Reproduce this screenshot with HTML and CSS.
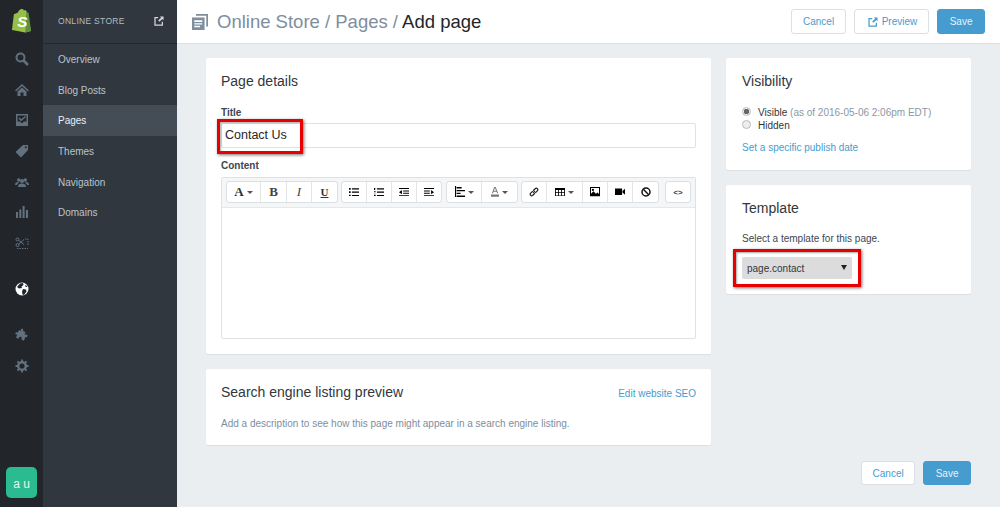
FILE: index.html
```html
<!DOCTYPE html>
<html lang="en">
<head>
  <meta charset="UTF-8">
  <title>Add page</title>
  <link rel="stylesheet" href="styles.css">
</head>
<body>
  <aside class="rail">
    <svg class="logo" viewBox="0 0 22 26" width="21" height="25"><path fill="#95bf47" d="M3 6.500 7 5c1-2.500 2.500-4 4.500-4 1 0 1.500.5 2 1.500l1.500-.5 1 1 .8 1.200L21 24l-6 1.500L1 23z"/><path fill="#5e8e3e" d="m16 3 1 1.500 1.500.5L21 24l-6 1.500z"/><text x="6.500" y="20" class="logo-s">S</text></svg>
    <a class="rail-item"><svg viewBox="0 0 14 14"><circle cx="5.500" cy="5.500" r="4" fill="none" stroke="currentColor" stroke-width="2"/><path d="m8.500 8.500 4.500 4.500" stroke="currentColor" stroke-width="2.600"/></svg></a>
    <a class="rail-item"><svg viewBox="0 0 14 14"><path fill="currentColor" d="M7 1 0 7.500l1 1 6-5.500 6 5.500 1-1zM2.500 8.500 7 4.500l4.500 4V13H8.500V9.500h-3V13h-3z"/></svg></a>
    <a class="rail-item"><svg viewBox="0 0 14 14"><path fill="currentColor" fill-rule="evenodd" d="M1 1h12v12H1zM2.500 2.500v6h2.800l1 1.500h1.400l1-1.500h2.800v-6z"/><path d="m4 5 2.200 2.200L10.500 3.500" fill="none" stroke="currentColor" stroke-width="1.500"/></svg></a>
    <a class="rail-item"><svg viewBox="0 0 14 14"><path fill="currentColor" fill-rule="evenodd" d="M8 1h5v5l-7 7.500L.5 8zM10.800 2.300a1 1 0 1 0 .01 0z"/></svg></a>
    <a class="rail-item"><svg viewBox="0 0 14 14"><circle cx="3.700" cy="5" r="1.700" fill="currentColor"/><circle cx="10.300" cy="5" r="1.700" fill="currentColor"/><circle cx="7" cy="6" r="2" fill="currentColor"/><path fill="currentColor" d="M3 12c0-2.500 1.500-3.500 4-3.500s4 1 4 3.500zM0 10c0-2 1-3 3-3l1 .8C2.800 8.500 2.200 9 2 10zM14 10c0-2-1-3-3-3l-1 .8c1.200.7 1.800 1.200 2 2.200z"/></svg></a>
    <a class="rail-item"><svg viewBox="0 0 14 14"><path fill="currentColor" d="M1 7h2v6H1zM4.300 4.500h2V13h-2zM7.600 1h2v12h-2zM10.900 5H13v8h-2.100z"/></svg></a>
    <a class="rail-item"><svg viewBox="0 0 14 14"><circle cx="2.500" cy="3.500" r="1.500" fill="none" stroke="currentColor"/><circle cx="2.500" cy="9" r="1.500" fill="none" stroke="currentColor"/><path d="M3.500 4.200 9 8.500M3.500 8.300 9 3.500" stroke="currentColor"/><path d="M10 3h3v6M2 12.500h11" fill="none" stroke="currentColor" stroke-dasharray="1.500 1"/></svg></a>
    <a class="rail-item globe"><svg viewBox="0 0 14 14"><circle cx="7" cy="7" r="6.500" fill="#fff"/><path fill="#22262b" d="M5 1.500 8 1l.5 2-2 1.500L7 6 4 6.500 2 5zM8 7l3 .5.500 2L9 13 7.500 12.500 7 9.500zM10.500 2.500 12.500 5 10.500 5z"/></svg></a>
    <a class="rail-item puzzle"><svg viewBox="0 0 14 14"><path fill="currentColor" d="M6 1.200c1-.9 2.200-.5 2.200.7 0 .6-.3.8 0 1.100l2.300 1.300-1 2c.4.600 1 .2 1.600.2 1.300 0 1.800 1.200 1 2.200-.6.700-1.200.4-1.800.3L9 12.800l-2.500-1.300c-.3-.4.2-.8.200-1.400 0-1-1.200-1.600-2.200-1-.9.600-.7 1.200-.7 1.800L1 9.500l1.300-2.700c-.3-.5-.8 0-1.300-.2C0 6 .2 4.500 1.300 4.300c.6-.1 1 .2 1.500.2L4.200 2l2 1c.4-.3-.6-1.100-.2-1.800z"/></svg></a>
    <a class="rail-item"><svg viewBox="0 0 14 14"><circle cx="7" cy="7" r="3.800" fill="none" stroke="currentColor" stroke-width="2.400"/><path d="M7 .5v13M.5 7h13M2.400 2.400l9.200 9.200M11.600 2.400l-9.200 9.200" stroke="currentColor" stroke-width="1.800" stroke-dasharray="2.200 8.600 2.200 0"/></svg></a>
    <div class="avatar">a u</div>
  </aside>

  <nav class="side">
    <div class="side-head">
      <span>ONLINE STORE</span>
      <svg viewBox="0 0 12 12" width="10" height="10"><path d="M5 2H1.200v8.800H10V7" fill="none" stroke="currentColor" stroke-width="1.500"/><path d="M7 .5h4.500V5L10 3.500 6.500 7 5 5.500 8.500 2z" fill="currentColor"/></svg>
    </div>
    <a class="side-link">Overview</a>
    <a class="side-link">Blog Posts</a>
    <a class="side-link active">Pages</a>
    <a class="side-link">Themes</a>
    <a class="side-link">Navigation</a>
    <a class="side-link">Domains</a>
  </nav>

  <div class="main">
    <header class="topbar">
      <svg class="crumb-icon" viewBox="1 1 14 14" width="16" height="16"><path fill="#7d8e9e" d="M4.500 1H15v11h-1.500V2.500h-9z"/><path fill="#7d8e9e" fill-rule="evenodd" d="M1 4h11v11H1zM3 6.500V8h7V6.500zM3 9v1.200h7V9zm0 2.300v1.200h5v-1.200z"/></svg>
      <h1 class="crumbs">Online Store / Pages / <b>Add page</b></h1>
      <div class="actions">
        <button class="btn">Cancel</button>
        <button class="btn preview"><svg viewBox="0 0 12 12" width="10" height="10"><path d="M5 2H1.200v8.800H10V7" fill="none" stroke="currentColor" stroke-width="1.500"/><path d="M7 .5h4.500V5L10 3.500 6.500 7 5 5.500 8.500 2z" fill="currentColor"/></svg>Preview</button>
        <button class="btn primary">Save</button>
      </div>
    </header>

    <div class="columns">
      <div class="col-left">
        <section class="card details">
          <h2>Page details</h2>
          <label class="field-label">Title</label>
          <div class="text-input">Contact Us</div>
          <label class="field-label content-label">Content</label>
          <div class="editor">
            <div class="toolbar">
              <div class="tool-group">
                <span class="tool w34 serif-a">A<i class="caret"></i></span>
                <span class="tool w26 serif-b">B</span>
                <span class="tool w25 serif-i">I</span>
                <span class="tool w25 serif-u">U</span>
              </div>
              <div class="tool-group">
                <span class="tool w25"><svg viewBox="0 0 12 10"><path d="M0 0h2v2H0zM0 4h2v2H0zM0 8h2v2H0zM3.500.3H12v1.400H3.500zM3.500 4.300H12v1.400H3.500zM3.500 8.300H12v1.400H3.500z"/></svg></span>
                <span class="tool w25"><svg viewBox="0 0 12 10"><path d="M0 0h1.500v2.500H0zM0 4h2v.8H0v.8h2v.6H0zM0 8h2v2H0zM3.500.3H12v1.400H3.500zM3.500 4.300H12v1.400H3.500zM3.500 8.300H12v1.400H3.500z"/></svg></span>
                <span class="tool w25"><svg viewBox="0 0 12 10"><path d="M0 0h12v1.300H0zM0 8.700h12V10H0zM5 3h7v1.200H5zM5 5.800h7V7H5zM3.500 2.500v5L0 5z"/></svg></span>
                <span class="tool w24"><svg viewBox="0 0 12 10"><path d="M0 0h12v1.300H0zM0 8.700h12V10H0zM0 3h7v1.200H0zM0 5.800h7V7H0zM8.500 2.500v5L12 5z"/></svg></span>
              </div>
              <div class="tool-group align-group">
                <span class="tool w35"><svg viewBox="0 0 9 10"><path d="M0 0h1v10H0zM1.500 1H6v1.300H1.500zM1.500 3.500H9v1.300H1.500zM1.500 6H5v1.300H1.500zM1.500 8.500H9V10H1.500z"/></svg><i class="caret"></i></span>
                <span class="tool w35"><svg class="small" viewBox="0 0 9 11"><path fill="#777" d="M3.700 0h1.600L8 7H6.800l-.6-1.700H2.800L2.200 7H1zM3.200 4.300h2.600L4.500 1zM0 8.500h9V11H0z"/></svg><i class="caret"></i></span>
              </div>
              <div class="tool-group">
                <span class="tool w25"><svg viewBox="0 0 12 12"><path d="M5 7 7 5M4.500 5 1.800 7.700a1.800 1.800 0 0 0 2.500 2.500L7 7.500M7.500 7l2.700-2.700a1.800 1.800 0 0 0-2.500-2.500L5 4.500" fill="none" stroke="#222" stroke-width="1.500"/></svg></span>
                <span class="tool w36"><svg viewBox="0 0 12 10"><path fill-rule="evenodd" d="M0 0h12v10H0zM1 2.500V5h2.800V2.500zm3.800 0V5h2.500V2.500zm3.500 0V5H11V2.500zM1 6v3h2.800V6zm3.800 0v3h2.500V6zm3.500 0v3H11V6z"/></svg><i class="caret"></i></span>
                <span class="tool w25"><svg viewBox="0 0 12 11"><path fill-rule="evenodd" d="M0 0h12v11H0zM1.200 1.200v7l3-3L7 8l2-1.500 1.800 2V1.200z"/><circle cx="3.500" cy="3.500" r="1.300"/></svg></span>
                <span class="tool w25"><svg viewBox="0 0 12 9"><path d="M0 .5h8.500v8H0zM9 3.500 12 1v7L9 5.500z"/></svg></span>
                <span class="tool w25"><svg viewBox="0 0 12 12"><circle cx="6" cy="6" r="4.800" fill="none" stroke="#111" stroke-width="1.800"/><path d="m2.800 2.800 6.400 6.400" stroke="#111" stroke-width="1.800"/></svg></span>
              </div>
              <div class="tool-group last">
                <span class="tool w24 code">&lt;&gt;</span>
              </div>
            </div>
            <div class="editor-body"></div>
          </div>
        </section>

        <section class="card seo">
          <div class="seo-head">
            <h2>Search engine listing preview</h2>
            <a class="link">Edit website SEO</a>
          </div>
          <p class="muted">Add a description to see how this page might appear in a search engine listing.</p>
        </section>
      </div>

      <div class="col-right">
        <section class="card visibility">
          <h2>Visibility</h2>
          <div class="radio-row"><i class="radio on"></i><span>Visible <em>(as of 2016-05-06 2:06pm EDT)</em></span></div>
          <div class="radio-row"><i class="radio"></i><span>Hidden</span></div>
          <a class="link publish">Set a specific publish date</a>
        </section>

        <section class="card template">
          <h2>Template</h2>
          <p>Select a template for this page.</p>
          <div class="select">page.contact<i></i></div>
        </section>
      </div>
    </div>

    <div class="footer-actions">
      <button class="btn">Cancel</button>
      <button class="btn primary">Save</button>
    </div>
  </div>

  <div class="callout callout-title"></div>
  <div class="callout callout-template"></div>
</body>
</html>
```

FILE: styles.css
```css
* { margin: 0; padding: 0; box-sizing: border-box; }
html, body {
  height: 100%;
  overflow: hidden;
}
body {
  display: flex;
  background: #ebeef0;
  font-family: "Liberation Sans", Arial, sans-serif;
  font-size: 10px;
  color: #31373d;
}

/* icon rail */
.rail {
  width: 43px;
  height: 507px;
  flex: none;
  background: #22262b;
  display: flex;
  flex-direction: column;
  align-items: center;
  padding-top: 8px;
  color: #62717f;
}
.logo { margin-bottom: 10.500px; }
.logo-s {
  font-family: "Liberation Sans", sans-serif;
  font-size: 16px;
  font-weight: bold;
  font-style: italic;
  fill: #fff;
}
.rail-item {
  height: 30.7px;
  flex: none;
  display: flex;
  align-items: center;
  justify-content: center;
}
.rail-item svg { width: 14px; height: 14px; display: block; }
.globe { margin-top: 15px; }
.puzzle { margin-top: 16px; }
.avatar {
  margin-top: auto;
  margin-bottom: 9px;
  width: 31px;
  height: 31px;
  border-radius: 5px;
  background: #2abb90;
  color: #e4f8f1;
  font-size: 12px;
  line-height: 34px;
  text-align: center;
}

/* secondary nav */
.side {
  width: 134px;
  flex: none;
  background: #31373e;
  color: #bcc3ca;
}
.side-head {
  height: 44px;
  border-bottom: 1px solid #24282d;
  padding: 0 13px 2px 15px;
  display: flex;
  align-items: center;
  justify-content: space-between;
  font-size: 8.500px;
  letter-spacing: .3px;
  color: #b4bbc2;
}
.side-head svg { color: #d3d8dc; }
.side-link {
  display: block;
  height: 30.7px;
  line-height: 32px;
  padding-left: 15px;
}
.side-link.active {
  background: #444d56;
  color: #eef0f2;
}

/* main area */
.main {
  flex: 1;
  min-width: 0;
}
.topbar {
  height: 44px;
  background: #fff;
  border-bottom: 1px solid #dde1e5;
  display: flex;
  align-items: center;
  padding: 0 15px;
}
.crumb-icon { margin-right: 9px; }
.crumbs {
  font-size: 18.500px;
  font-weight: normal;
  color: #7d8e9e;
}
.crumbs b {
  font-weight: normal;
  color: #22262b;
}
.actions {
  margin-left: auto;
  display: flex;
  gap: 8px;
}
.btn {
  height: 25px;
  padding: 0 10.500px;
  border: 1px solid #dbe0e4;
  border-radius: 3px;
  background: #fff;
  color: #479ccf;
  font-family: inherit;
  font-size: 10px;
  display: inline-flex;
  align-items: center;
  gap: 4px;
}
.btn.preview { padding: 0 11px 0 13px; }
.btn.primary {
  background: #479ccf;
  border-color: #479ccf;
  color: #e6f2f9;
  padding: 0 11.500px;
}

.columns {
  display: flex;
  gap: 15px;
  padding: 14px 29px 0 29px;
}
.col-left { width: 505px; }
.col-right { width: 245px; }
.card {
  background: #fff;
  border-radius: 2px;
  box-shadow: 0 1px 1px #dcdfe3;
  padding: 15px;
  margin-bottom: 15px;
}
.col-right .card { padding-left: 16px; }
.card h2 {
  font-size: 14px;
  font-weight: normal;
  line-height: 16px;
  color: #31373d;
}

/* page details */
.details { height: 296px; }
.field-label {
  display: block;
  margin-top: 17px;
  margin-bottom: 3px;
  font-size: 10px;
  line-height: 14px;
  font-weight: bold;
  color: #3d4650;
}
.field-label.content-label { margin: 11px 0 0; }
.text-input {
  height: 25px;
  border: 1px solid #dde2e6;
  border-radius: 2px;
  padding-left: 3px;
  font-size: 12.500px;
  line-height: 22px;
  color: #22262b;
}
.editor {
  height: 162px;
  margin-top: 4px;
  border: 1px solid #dde2e6;
  border-radius: 2px;
  display: flex;
  flex-direction: column;
}
.toolbar {
  height: 30px;
  flex: none;
  background: #f5f6f7;
  border-bottom: 1px solid #e5e8eb;
  padding: 3px 4px;
  display: flex;
  gap: 3px;
}
.tool-group {
  height: 22px;
  display: flex;
  background: #fff;
  border: 1px solid #dbe0e4;
  border-radius: 3px;
}
.align-group { margin-left: 1px; }
.tool-group.last { margin-left: 3px; }
.tool {
  height: 100%;
  display: flex;
  align-items: center;
  justify-content: center;
  gap: 3px;
  border-right: 1px solid #e3e6e9;
  color: #222;
}
.tool:last-child { border-right: 0; }
.tool svg { width: 10px; height: auto; display: block; }
.tool svg.small { width: 8px; }
.w24 { width: 24px; }
.w25 { width: 25px; }
.w26 { width: 26px; }
.w34 { width: 34px; }
.w35 { width: 35px; }
.w36 { width: 36px; }
.serif-a, .serif-b, .serif-i, .serif-u {
  font-family: "Liberation Serif", serif;
  font-size: 13px;
}
.serif-a { font-weight: bold; color: #333; }
.serif-b { font-weight: bold; color: #444; }
.serif-i { font-style: italic; color: #444; }
.serif-u { font-weight: bold; font-size: 11px; text-decoration: underline; color: #333; }
.code { font-size: 8px; font-weight: bold; color: #444; }
.caret {
  width: 0;
  height: 0;
  border: 3px solid transparent;
  border-top: 3px solid #555;
  border-bottom: 0;
}
.editor-body { flex: 1; }

/* seo */
.seo { height: 76px; }
.seo-head {
  display: flex;
  justify-content: space-between;
  align-items: baseline;
}
.link { color: #479ccf; font-size: 10px; }
.muted {
  margin-top: 18px;
  font-size: 10px;
  color: #7d8e9e;
}

/* right column */
.visibility { height: 112px; }
.radio-row {
  display: flex;
  align-items: center;
  gap: 7px;
  height: 13px;
  font-size: 10px;
}
.visibility h2 { margin-bottom: 17px; }
.radio {
  width: 9px;
  height: 9px;
  margin-top: -2px;
  border-radius: 50%;
  border: 1px solid #bbb;
  background: #eee;
}
.radio.on {
  background: radial-gradient(circle, #666 0 2.500px, #eee 3px);
}
.radio-row em {
  font-style: normal;
  color: #8a98a5;
}
.publish {
  display: block;
  margin-top: 10px;
}
.template { height: 109px; }
.template p {
  margin-top: 17px;
  font-size: 10px;
  color: #3d4650;
}
.select {
  position: relative;
  width: 110px;
  height: 22px;
  margin-top: 13px;
  padding-left: 5px;
  border-radius: 2px;
  background: #dcdcdc;
  font-size: 10px;
  line-height: 24px;
  color: #31373d;
}
.select i {
  position: absolute;
  top: 8px;
  right: 5px;
  border: 3px solid transparent;
  border-top: 5px solid #222;
  border-bottom: 0;
}

.footer-actions {
  display: flex;
  justify-content: flex-end;
  gap: 8px;
  padding: 1px 29px 0 0;
}
.footer-actions .btn { height: 24px; }

/* red annotation boxes drawn over the screenshot */
.callout {
  position: absolute;
  border: 3px solid #e80000;
  box-shadow: 1px 1px 3px rgba(0, 0, 0, .55), inset 1px 1px 2px rgba(0, 0, 0, .35);
}
.callout-title {
  left: 217px;
  top: 119px;
  width: 86px;
  height: 35px;
}
.callout-template {
  left: 733px;
  top: 249px;
  width: 128px;
  height: 38px;
}
```
